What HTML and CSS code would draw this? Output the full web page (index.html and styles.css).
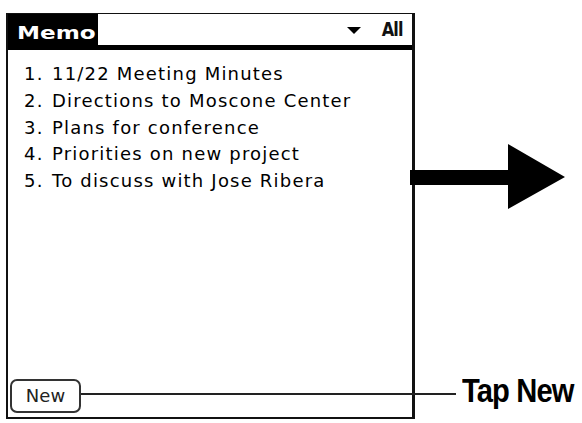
FILE: index.html
```html
<!DOCTYPE html>
<html lang="en">
<head>
<meta charset="utf-8">
<title>Memo - Tap New</title>
<link rel="stylesheet" href="styles.css">
</head>
<body>
<div class="page">
  <div class="screen">
    <div class="titlebar">
      <div class="tab"><span class="tab-text">Memo</span></div>
      <div class="category">
        <span class="tri"></span>
        <span class="cat-label">All</span>
      </div>
    </div>
    <ol class="memos">
      <li class="memo"><span class="num">1.</span><span class="txt">11/22 Meeting Minutes</span></li>
      <li class="memo"><span class="num">2.</span><span class="txt">Directions to Moscone Center</span></li>
      <li class="memo"><span class="num">3.</span><span class="txt">Plans for conference</span></li>
      <li class="memo"><span class="num">4.</span><span class="txt">Priorities on new project</span></li>
      <li class="memo"><span class="num">5.</span><span class="txt">To discuss with Jose Ribera</span></li>
    </ol>
    <div class="footer">
      <button class="new-btn">New</button>
    </div>
  </div>
  <div class="notes">
    <svg class="arrow" width="155" height="66" viewBox="0 0 155 66">
      <polygon points="0,26 98,26 98,0 155,33 98,65 98,41 0,41" fill="#000"/>
    </svg>
    <div class="callout"><span class="callout-text">Tap New</span></div>
  </div>
</div>
</body>
</html>
```
FILE: styles.css
```css
html, body {
  margin: 0;
  padding: 0;
  background: #fff;
}
body {
  font-family: "DejaVu Sans", "Liberation Sans", sans-serif;
  color: #111;
}
.page {
  display: flex;
  align-items: flex-start;
  padding: 13px 0 0 6px;
}
.screen {
  box-sizing: border-box;
  flex: none;
  width: 409px;
  height: 406px;
  border-style: solid;
  border-color: #111;
  border-width: 1px 3px 2px 2px;
  display: flex;
  flex-direction: column;
  position: relative;
  z-index: 1;
}
.titlebar {
  height: 31px;
  border-bottom: 5px solid #000;
  display: flex;
  justify-content: space-between;
  align-items: stretch;
}
.tab {
  width: 90px;
  background: #000;
  padding: 9px 0 0 9px;
  box-sizing: border-box;
}
.tab-text {
  display: inline-block;
  color: #fff;
  font-weight: bold;
  font-size: 17px;
  line-height: 20px;
  letter-spacing: 0;
  transform: scaleX(1.36);
  transform-origin: left center;
}
.category {
  display: flex;
  align-items: flex-start;
  padding: 5px 9px 0 0;
}
.tri {
  width: 0;
  height: 0;
  border-left: 7px solid transparent;
  border-right: 7px solid transparent;
  border-top: 7px solid #000;
  margin: 8px 17px 0 0;
}
.cat-label {
  display: inline-block;
  font-size: 19px;
  line-height: 20px;
  letter-spacing: -1px;
  font-weight: bold;
  transform: scaleX(0.85);
  transform-origin: right center;
}
.memos {
  list-style: none;
  margin: 0;
  padding: 11px 0 0 16px;
  flex: 1;
  font-size: 18px;
  line-height: 26.75px;
  letter-spacing: 1.2px;
  color: #000;
}
.memo {
  display: flex;
}
.num {
  width: 28px;
  flex: none;
}
.footer {
  padding: 0 0 4px 2px;
}
.new-btn {
  position: relative;
  box-sizing: border-box;
  width: 71px;
  height: 34px;
  border: 2px solid #333;
  border-radius: 7px;
  background: #fff;
  font-family: "DejaVu Sans", sans-serif;
  font-size: 18px;
  color: #222;
  padding: 0;
  line-height: 30px;
}
.new-btn::after {
  content: "";
  position: absolute;
  left: calc(100% + 2px);
  top: 12px;
  width: 375px;
  height: 1.5px;
  background: #222;
}
.notes {
  display: flex;
  flex-direction: column;
  margin-left: -5px;
  position: relative;
  z-index: 2;
}
.arrow {
  display: block;
  margin-top: 131px;
}
.callout {
  margin-top: 164px;
  padding-left: 52px;
  white-space: nowrap;
}
.callout-text {
  display: inline-block;
  font-family: "Liberation Sans", "Arial", sans-serif;
  font-weight: bold;
  font-size: 33.5px;
  line-height: 33.5px;
  letter-spacing: -1px;
  color: #000;
  transform: scaleX(0.87);
  transform-origin: left center;
}
```
